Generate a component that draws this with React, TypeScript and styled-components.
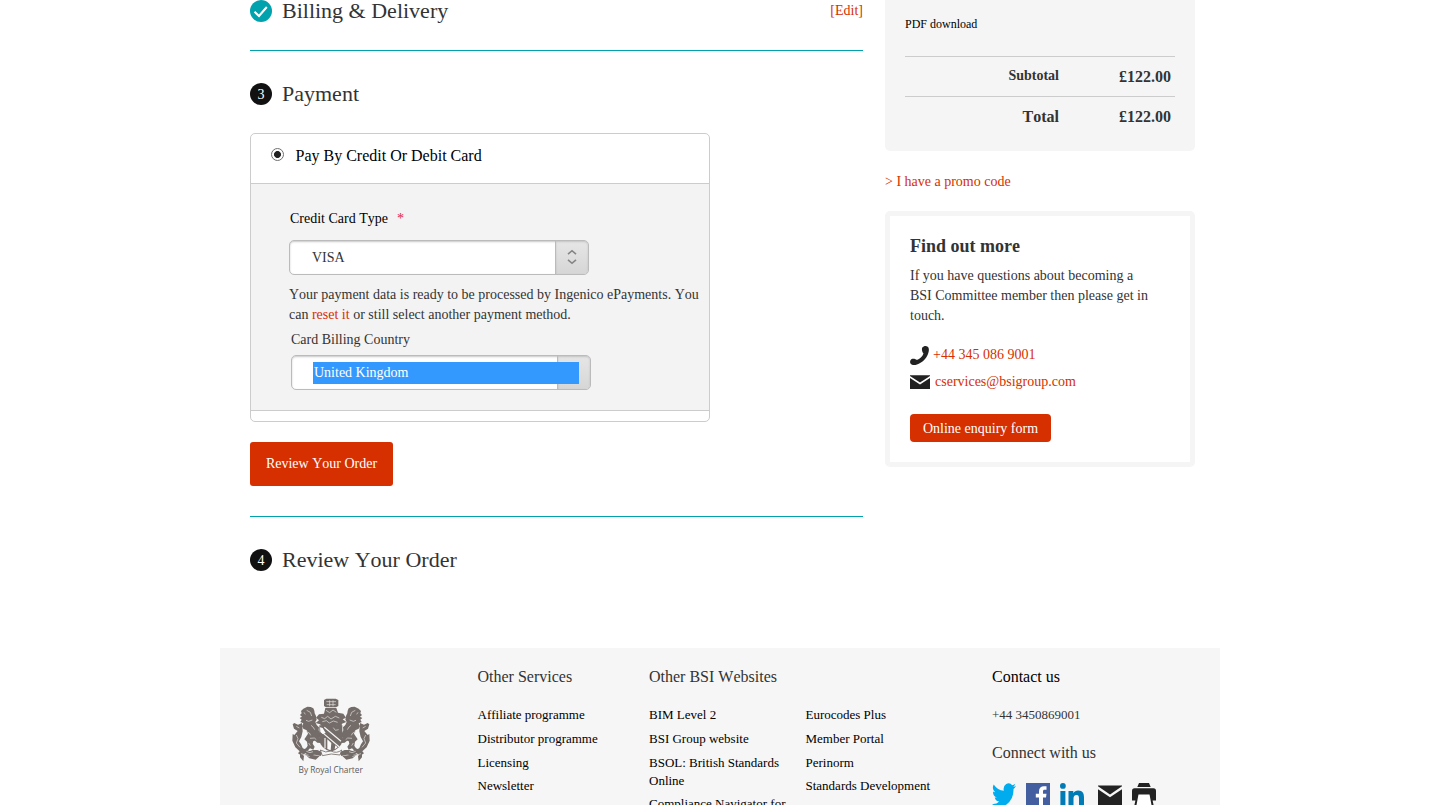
import React from 'react';
import styled, { createGlobalStyle } from 'styled-components';

const red = '#d62f00';
const teal = '#00a2ae';
const ink = '#333';

const GlobalStyle = createGlobalStyle`
  * { box-sizing: border-box; }
  body {
    margin: 0;
    background: #fff;
    color: ${ink};
    font-family: 'Liberation Serif', 'Times New Roman', serif;
    font-size: 14px;
    line-height: 20px;
    font-kerning: none;
    font-variant-ligatures: none;
  }
  h2, h3, p, ul { margin: 0; padding: 0; font-weight: normal; }
  ul { list-style: none; }
`;

const Page = styled.div`
  width: 1000px;
  height: 805px;
  margin: 0 auto;
  overflow: hidden;
`;

const Content = styled.div`
  display: flex;
  gap: 22px;
  height: 648px;
  padding: 0 25px 0 30px;
`;

const Steps = styled.main`
  width: 613px;
`;

const Step = styled.section<{ $first?: boolean; $last?: boolean; $bottom?: number }>`
  padding: ${p => (p.$first ? 0 : 32)}px 0 ${p => p.$bottom ?? 0}px;
  border-bottom: ${p => (p.$last ? '0' : `1px solid ${teal}`)};
`;

const StepHead = styled.div`
  display: flex;
  gap: 10px;
  height: 22px;
`;

const StepTitle = styled.h2`
  flex: 1;
  font-size: 22px;
  line-height: 22px;
`;

const StepBadge = styled.span`
  width: 22px;
  height: 22px;
  border-radius: 50%;
  background: #111;
  color: #fff;
  font-size: 14px;
  line-height: 23px;
  text-align: center;
`;

const Link = styled.a`
  color: ${red};
  text-decoration: none;
`;

const EditLink = styled(Link)`
  line-height: 22px;
`;

const PaymentCard = styled.div`
  width: 460px;
  height: 289px;
  margin-top: 28px;
  border: 1px solid #ccc;
  border-radius: 5px;
`;

const MethodRow = styled.label`
  display: flex;
  align-items: flex-start;
  gap: 11.5px;
  height: 49px;
  padding: 14px 20px 0;
  color: #000;
  font-size: 16px;
  line-height: 16px;
`;

const Radio = styled.span`
  width: 13px;
  height: 13px;
  border: 1px solid #707070;
  border-radius: 50%;
  background: radial-gradient(circle, #222 0 3.1px, #fff 3.8px);
`;

const MethodBody = styled.div`
  height: 228px;
  padding: 25px 8px 0 38px;
  background: #f3f3f3;
  border-top: 1px solid #ccc;
  border-bottom: 1px solid #ccc;
`;

const FieldLabel = styled.div<{ $dark?: boolean; $indent: number }>`
  padding-left: ${p => p.$indent}px;
  color: ${p => (p.$dark ? '#000' : ink)};
`;

const Required = styled.span`
  margin-left: 9px;
  color: #e0243c;
`;

const Select = styled.div<{ $top: number; $left?: number }>`
  display: flex;
  width: 300px;
  height: 35px;
  margin: ${p => p.$top}px 0 0 ${p => p.$left ?? 0}px;
  border: 1px solid #bbb;
  border-radius: 5px;
  background: #fff;
  box-shadow: inset 0 1px 2px rgba(0, 0, 0, 0.22);
  position: relative;
`;

const SelectValue = styled.span`
  flex: 1;
  padding-left: 22px;
  line-height: 33px;
`;

const SelectHandle = styled.span`
  display: flex;
  align-items: center;
  justify-content: center;
  width: 33px;
  padding-bottom: 2px;
  border-left: 1px solid #bbb;
  border-radius: 0 4px 4px 0;
  background: linear-gradient(#e6e6e6, #d6d6d6);
  box-shadow: inset 0 1px 2px rgba(0, 0, 0, 0.15);
`;

const Selection = styled.span`
  position: absolute;
  left: 21px;
  top: 6px;
  width: 266px;
  height: 22px;
  padding-left: 1px;
  background: #39f;
  color: #fff;
  line-height: 21px;
`;

const Notice = styled.p`
  margin: 10px 0 5px;
`;

const Button = styled.button<{ $small?: boolean }>`
  display: block;
  width: ${p => (p.$small ? 141 : 143)}px;
  height: ${p => (p.$small ? 28 : 44)}px;
  margin-top: ${p => (p.$small ? 16 : 20)}px;
  padding: ${p => (p.$small ? 2 : 0)}px 0 0;
  border: 0;
  border-radius: ${p => (p.$small ? 4 : 3)}px;
  background: ${red};
  color: #fff;
  font: inherit;
  font-kerning: none;
`;

const Sidebar = styled.aside`
  width: 310px;
`;

const Summary = styled.div`
  height: 151px;
  padding: 14px 20px 0;
  border-radius: 0 0 5px 5px;
  background: #f5f5f5;
`;

const Format = styled.div`
  height: 42px;
  color: #000;
  font-size: 12px;
`;

const Amounts = styled.div<{ $total?: boolean }>`
  display: grid;
  grid-template-columns: 154px 1fr;
  height: 40px;
  padding: ${p => (p.$total ? 10 : 9)}px 4px 0 0;
  border-top: 1px solid #ccc;
  font-weight: bold;
  font-size: ${p => (p.$total ? 16 : 14)}px;
  text-align: right;
`;

const Price = styled.span<{ $drop?: number }>`
  padding-top: ${p => p.$drop ?? 0}px;
  font-size: 16px;
`;

const Promo = styled.p`
  padding: 21px 0 19px;
`;

const Help = styled.div`
  height: 256px;
  padding: 20px;
  border: 5px solid #f5f5f5;
  border-radius: 5px;
`;

const HelpTitle = styled.h3`
  margin-bottom: 10px;
  font-size: 18px;
  font-weight: bold;
`;

const HelpText = styled.p`
  width: 242px;
  margin-bottom: 18px;
`;

const ContactLine = styled.div<{ $gap: number }>`
  display: flex;
  gap: ${p => p.$gap}px;
  height: 27px;
  line-height: 22px;

  svg { flex: none; }
`;

const Footer = styled.footer`
  display: grid;
  grid-template-columns: 257.5px 171.5px 156.5px 186.5px 1fr;
  height: 260px;
  padding-top: 19px;
  background: #f6f6f6;
  font-size: 13px;
`;

const FooterTitle = styled.h3<{ $dark?: boolean }>`
  height: 20px;
  color: ${p => (p.$dark ? '#000' : ink)};
  font-size: 16px;
  white-space: nowrap;
`;

const FooterLinks = styled.ul`
  padding-top: 19.4px;
  color: #000;
  line-height: 18px;
`;

const FooterLink = styled.li`
  width: 140px;
  margin-bottom: 5.7px;
`;

const Charter = styled.div`
  padding: 30px 0 0 67px;
`;

const FooterPhone = styled.p`
  margin: 18px 0 18px;
`;

const Social = styled.div`
  display: flex;
  gap: 10px;
  margin-top: 20px;
`;

const SocialGroup = styled.div`
  display: flex;
  gap: 10px;
  margin-left: 4px;
`;

const CheckIcon = () => (
  <svg width="22" height="22" viewBox="0 0 22 22">
    <circle cx="11" cy="11" r="11" fill={teal} />
    <path d="M4.5 11.8 9 16 16.8 7" fill="none" stroke="#fff" strokeWidth="2" />
  </svg>
);

const UpDownIcon = () => (
  <svg width="10" height="16" viewBox="0 0 10 16" fill="none" stroke="#858585" strokeWidth="1.6">
    <path d="M1 5.200 5 1.700 9 5.200M1 10.800 5 14.300 9 10.800" />
  </svg>
);

const PhoneIcon = () => (
  <svg width="19" height="22" viewBox="0 0 19 22">
    <path
      d="M12.3 3.6C13.5 2 16 1.5 17.7 2.7c1.7 1.3 1.4 4.6.3 7.3-1.8 4.8-6 8.8-11 10.5-2.6.9-5.2.7-6.3-.7-1.2-1.6-.5-4 1-4.8 1.400-.8 4.600-.1 5.100 1 3-1 5.600-3.500 6.700-6.600-1.200-.6-2.100-4.400-1.200-5.800z"
      fill="#222"
    />
  </svg>
);

const MailIcon = () => (
  <svg width="20" height="22" viewBox="0 -4.300 20 22" fill="#222">
    <path d="M0 0H20V.7L10 7.200 0 .7z" />
    <path d="M0 2.600 10 9.200 20 2.600V13.700H0z" />
  </svg>
);

const ShareMailIcon = () => (
  <svg width="24" height="24" viewBox="0 0 24 24" fill="#222">
    <path d="M0 2.400H24V3.200L12 11.400 0 3.200z" />
    <path d="M0 6.200 12 14.200 24 6.200V22.400H0z" />
  </svg>
);

const TwitterIcon = () => (
  <svg width="24" height="24" viewBox="0 2 24 20" preserveAspectRatio="none" fill="#00aced">
    <path d="M24 4.600a10 10 0 0 1-2.800.8 5 5 0 0 0 2.100-2.700 10 10 0 0 1-3.100 1.200 4.900 4.900 0 0 0-8.400 4.500A14 14 0 0 1 1.700 3.200a4.900 4.900 0 0 0 1.500 6.500 4.900 4.900 0 0 1-2.200-.6 4.900 4.900 0 0 0 3.900 4.900 4.900 4.900 0 0 1-2.200.1 4.900 4.900 0 0 0 4.600 3.400A9.900 9.900 0 0 1 0 19.500 14 14 0 0 0 21.500 7.100 10 10 0 0 0 24 4.600z" />
  </svg>
);

const FacebookIcon = () => (
  <svg width="24" height="24" viewBox="0 0 24 24">
    <path d="M0 0H24V24H0z" fill="#435fa0" />
    <path d="M13 24V14.500H9.800V10.800H13V8.200C13 4.900 15 3.200 18 3.200H20.500V6.700H18.700C17.400 6.700 17 7.300 17 8.500V10.800H20.500L20 14.500H17V24z" fill="#fff" />
  </svg>
);

const LinkedInIcon = () => (
  <svg width="24" height="24" viewBox="0 0 24 24" fill="#007bb6">
    <circle cx="2.900" cy="2.900" r="2.900" />
    <path d="M.4 8H5.400V24H.4zM8.500 8H13.300V10.200C14.300 8.500 16 7.600 18.200 7.600 22.800 7.600 24 10.500 24 14.700V24H19V15.600C19 13.500 18.700 11.900 16.600 11.900 14.300 11.900 13.500 13.500 13.500 15.600V24H8.500z" />
  </svg>
);

const PrintIcon = () => (
  <svg width="24" height="24" viewBox="0 0 24 24">
    <path d="M7 0H17L18.700 4H5.300zM2.500 5.200H21.500Q24 5.200 24 8V17.500H20.600L22 24H2L3.400 17.500H0V8Q0 5.200 2.500 5.200z" fill="#222" />
    <path d="M6.500 11.500H17.500L19.500 22H4.500z" fill="#fff" />
  </svg>
);

const Supporter = () => (
  <g>
    <path d="M63 62 70 55 76 52 82 49 92 50 100 54 103 61 104 69 108 77 110 88 106 95 110 104 117 111 116 120 122 132 119 143 126 151 122 158 112 157 105 151 100 152 98 160 104 169 100 178 90 174 83 181 74 184 71 177 78 174 83 166 81 154 73 147 79 138 84 130 80 120 70 115 66 108 70 99 61 95 65 88 59 83 66 79 60 74 65 69z" />
    <path d="M66 98 54 103 43 98 38 102 42 115 53 122 43 134 38 131 37 151 46 171 59 183 54 189 65 196 76 189 89 195 105 193 122 197 128 186 112 179 98 179 89 182 76 178 68 173 63 162 57 153 64 140 68 123z" />
    <path d="M60 185 72 197 70 213 60 201zM74 191 97 194 119 197 107 208 88 204z" />
  </g>
);

const SupporterDetail = () => (
  <path
    d="M80 60 91 66 95 77M78 90 86 93 97 89M93 105 99 110 104 118M79 124 88 128 92 135M90 144 103 143 109 148M49 134 54 145 49 158 60 171M79 183 90 187 99 184M63 190 76 194 89 199M72 66 76 72M49 108 58 113M86 158 91 166"
    fill="none"
    stroke="#d2cecc"
    strokeWidth="2.400"
  />
);

const CrestIcon = () => (
  <svg width="90" height="82" viewBox="21 20 270 246">
    <g fill="#736c69">
      <Supporter />
      <SupporterDetail />
      <g transform="matrix(-1 0 0 1 306 0)">
        <Supporter />
        <SupporterDetail />
      </g>
      <path d="M132 29 139 25H167L175 29V47L168 51H138L132 47zM136 53H169L174 67 190 70 198 82 188 87 199 95 186 100 184 109 169 106 157 112 144 107 128 110 120 102 107 98 117 90 108 82 117 72 132 70z" />
      <path d="M118 105H187V149Q186 173 153 184 121 174 118 148z" />
    </g>
    <g fill="none" stroke="#dedbd9" strokeWidth="2.200">
      <path d="M139 34H168M140 43H167M149 30V48M159 30V48M138 60 149 67 159 59 169 66M124 81 134 85 143 78 153 86 166 78 178 83M127 94 139 91 148 98 160 92 173 96" />
      <path d="M160 112 166 120 176 118" />
    </g>
    <g fill="none" stroke="#f4f3f3" strokeWidth="3.600">
      <path d="M124 124 178 170M133 111 183 153" />
      <path d="M135 143V174" />
    </g>
    <path d="M120 111 128 113 137 128 128 131 121 125zM142 147 154 158 152 180 142 176zM166 165 173 171 164 177z" fill="#fafafa" />
    <path d="M121 179Q137 189 153 182 170 191 185 179L180 194Q154 187 127 196z" fill="#f6f6f6" stroke="#736c69" strokeWidth="2.500" />
    <text x="55.500" y="247" fill="#5d5a59" fontFamily="Open Sans, sans-serif" fontSize="26" textLength="193" lengthAdjust="spacingAndGlyphs">
      By Royal Charter
    </text>
  </svg>
);

const services = ['Affiliate programme', 'Distributor programme', 'Licensing', 'Newsletter'];
const websites = ['BIM Level 2', 'BSI Group website', 'BSOL: British Standards Online', 'Compliance Navigator for'];
const moreWebsites = ['Eurocodes Plus', 'Member Portal', 'Perinorm', 'Standards Development'];

const LinkColumn = ({ title, links }: { title?: string; links: string[] }) => (
  <div>
    <FooterTitle>{title}</FooterTitle>
    <FooterLinks>
      {links.map(link => (
        <FooterLink key={link}>{link}</FooterLink>
      ))}
    </FooterLinks>
  </div>
);

export default function App() {
  return (
    <>
      <GlobalStyle />
      <Page>
        <Content>
          <Steps>
            <Step $first $bottom={28}>
              <StepHead>
                <CheckIcon />
                <StepTitle>Billing &amp; Delivery</StepTitle>
                <EditLink>[Edit]</EditLink>
              </StepHead>
            </Step>
            <Step $bottom={30}>
              <StepHead>
                <StepBadge>3</StepBadge>
                <StepTitle>Payment</StepTitle>
              </StepHead>
              <PaymentCard>
                <MethodRow>
                  <Radio />
                  <span>Pay By Credit Or Debit Card</span>
                </MethodRow>
                <MethodBody>
                  <FieldLabel $dark $indent={1}>
                    Credit Card Type<Required>*</Required>
                  </FieldLabel>
                  <Select $top={11}>
                    <SelectValue>VISA</SelectValue>
                    <SelectHandle>
                      <UpDownIcon />
                    </SelectHandle>
                  </Select>
                  <Notice>
                    Your payment data is ready to be processed by Ingenico ePayments. You can <Link>reset it</Link> or
                    still select another payment method.
                  </Notice>
                  <FieldLabel $indent={2}>Card Billing Country</FieldLabel>
                  <Select $top={5} $left={2}>
                    <SelectValue />
                    <SelectHandle />
                    <Selection>United Kingdom</Selection>
                  </Select>
                </MethodBody>
              </PaymentCard>
              <Button>Review Your Order</Button>
            </Step>
            <Step $last>
              <StepHead>
                <StepBadge>4</StepBadge>
                <StepTitle>Review Your Order</StepTitle>
              </StepHead>
            </Step>
          </Steps>

          <Sidebar>
            <Summary>
              <Format>PDF download</Format>
              <Amounts>
                <span>Subtotal</span>
                <Price $drop={1}>£122.00</Price>
              </Amounts>
              <Amounts $total>
                <span>Total</span>
                <Price>£122.00</Price>
              </Amounts>
            </Summary>
            <Promo>
              <Link>&gt; I have a promo code</Link>
            </Promo>
            <Help>
              <HelpTitle>Find out more</HelpTitle>
              <HelpText>If you have questions about becoming a BSI Committee member then please get in touch.</HelpText>
              <ContactLine $gap={4}>
                <PhoneIcon />
                <Link>+44 345 086 9001</Link>
              </ContactLine>
              <ContactLine $gap={5}>
                <MailIcon />
                <Link>cservices@bsigroup.com</Link>
              </ContactLine>
              <Button $small>Online enquiry form</Button>
            </Help>
          </Sidebar>
        </Content>

        <Footer>
          <Charter>
            <CrestIcon />
          </Charter>
          <LinkColumn title="Other Services" links={services} />
          <LinkColumn title="Other BSI Websites" links={websites} />
          <LinkColumn links={moreWebsites} />
          <div>
            <FooterTitle $dark>Contact us</FooterTitle>
            <FooterPhone>+44 3450869001</FooterPhone>
            <FooterTitle>Connect with us</FooterTitle>
            <Social>
              <TwitterIcon />
              <FacebookIcon />
              <LinkedInIcon />
              <SocialGroup>
                <ShareMailIcon />
                <PrintIcon />
              </SocialGroup>
            </Social>
          </div>
        </Footer>
      </Page>
    </>
  );
}
